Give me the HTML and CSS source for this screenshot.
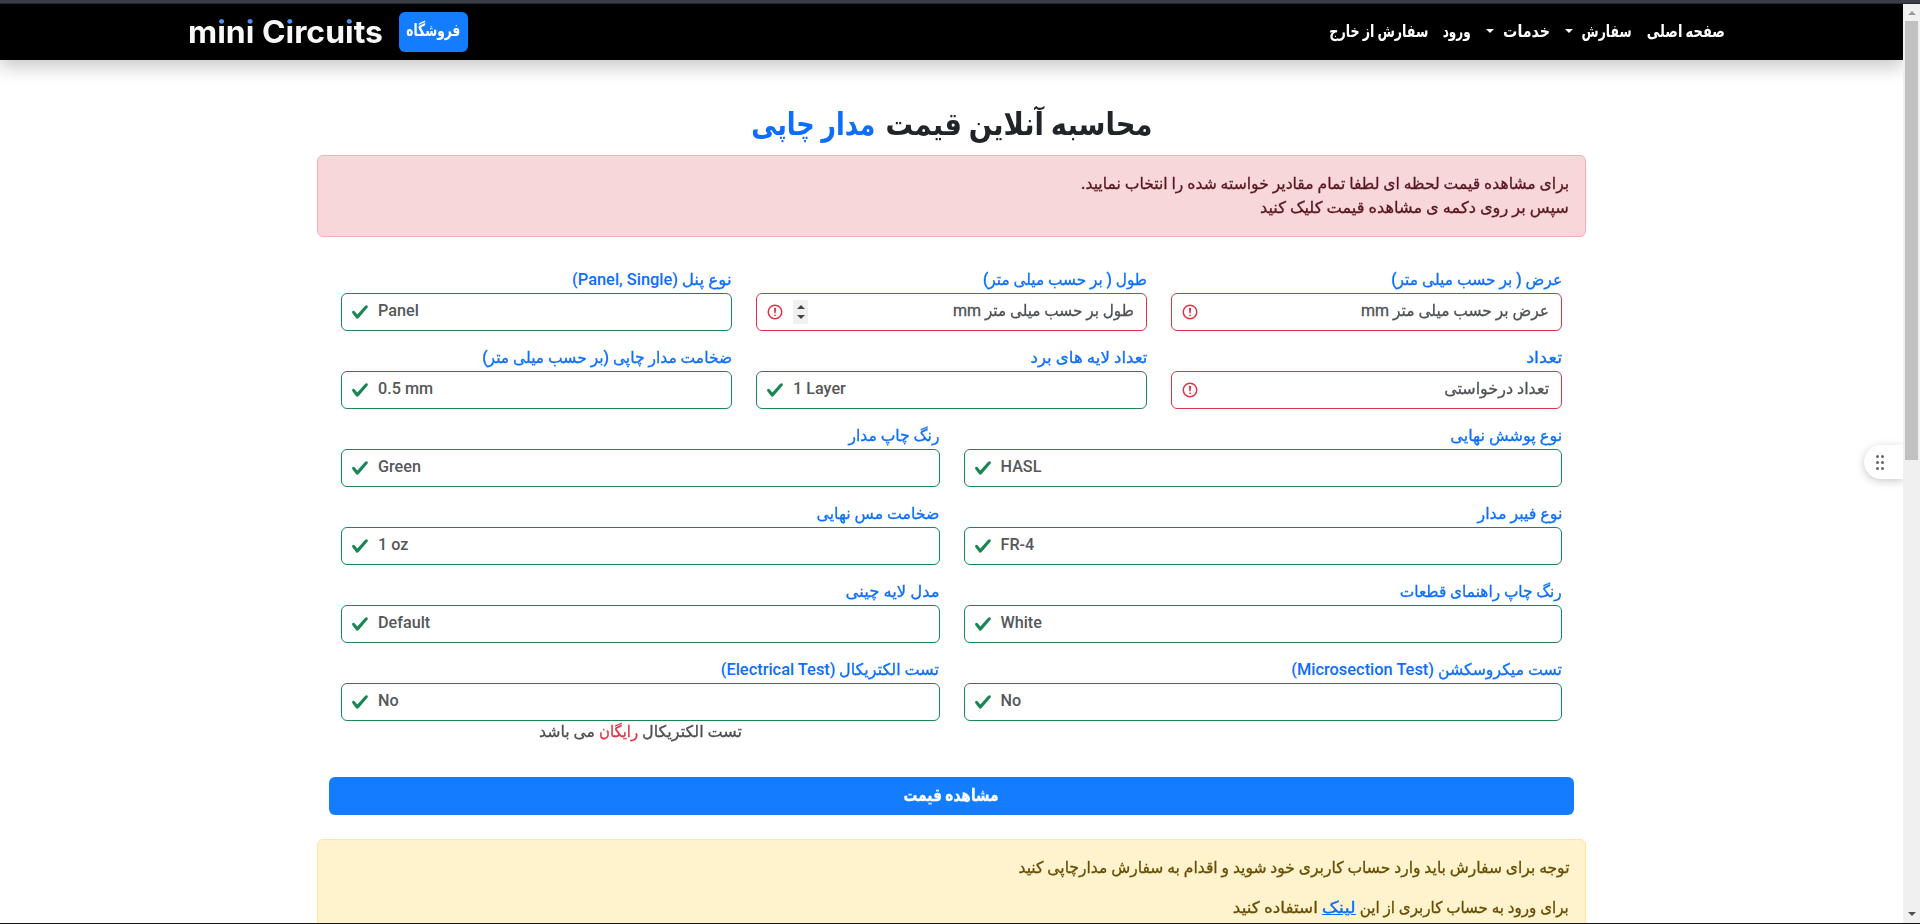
FILE: index.html
```html
<!DOCTYPE html>
<html lang="fa">
<head>
<meta charset="utf-8">
<title>mini Circuits</title>
<link rel="stylesheet" href="styles.css">
</head>
<body>
<svg class="defs" aria-hidden="true">
  <symbol id="ok" viewBox="0 0 8 8"><path fill="#198754" d="M2.3 6.73.6 4.53c-.4-1.04.46-1.4 1.1-.8l1.1 1.4 3.4-3.8c.6-.63 1.6-.27 1.2.7l-4 4.6c-.43.5-.8.4-1.1.1z"/></symbol>
  <symbol id="bad" viewBox="0 0 12 12"><g fill="none" stroke="#dc3545"><circle cx="6" cy="6" r="4.5"/><path stroke-linejoin="round" d="M5.8 3.6h.4L6 6.5z"/></g><circle cx="6" cy="8.2" r=".6" fill="#dc3545"/></symbol>
</svg>
<div class="edge-top"></div>
<div class="window">
  <div class="page" dir="rtl">
    <nav class="navbar">
      <div class="links">
        <a><span data-w="78">صفحه اصلی</span></a>
        <a class="drop"><span data-w="50">سفارش</span><i class="caret"></i></a>
        <a class="drop"><span data-w="47">خدمات</span><i class="caret"></i></a>
        <a><span data-w="28">ورود</span></a>
        <a><span data-w="99">سفارش از خارج</span></a>
      </div>
      <div class="brand">
        <a class="shop"><span data-w="54">فروشگاه</span></a>
        <a class="logo" dir="ltr"><span data-w="195">m<b>i</b>n<b>i</b> C<b>i</b>rcu<b>i</b>ts</span></a>
      </div>
    </nav>
    <main class="content">
      <h1 class="title"><span data-w="267">محاسبه آنلاین قیمت</span><span class="accent" data-w="124">مدار چاپی</span></h1>
      <div class="alert danger">
        <div><span data-w="488">برای مشاهده قیمت لحظه ای لطفا تمام مقادیر خواسته شده را انتخاب نمایید.</span></div>
        <div><span data-w="309">سپس بر روی دکمه ی مشاهده قیمت کلیک کنید</span></div>
      </div>
      <form class="form">
        <div class="row three">
          <div class="field"><label><span data-w="171">عرض ( بر حسب میلی متر)</span></label><div class="box invalid"><span class="ph"><span data-w="156">عرض بر حسب میلی متر</span> mm</span><svg><use href="#bad"/></svg></div></div>
          <div class="field"><label><span data-w="164">طول ( بر حسب میلی متر)</span></label><div class="box invalid"><span class="ph"><span data-w="149">طول بر حسب میلی متر</span> mm</span><span class="spin"><i></i><i></i></span><svg><use href="#bad"/></svg></div></div>
          <div class="field"><label><span data-w="50">نوع پنل</span> <bdi>(Panel, Single)</bdi></label><div class="box valid"><span dir="ltr">Panel</span><svg><use href="#ok"/></svg></div></div>
        </div>
        <div class="row three">
          <div class="field"><label><span data-w="36">تعداد</span></label><div class="box invalid"><span class="ph"><span data-w="105">تعداد درخواستی</span></span><svg><use href="#bad"/></svg></div></div>
          <div class="field"><label><span data-w="117">تعداد لایه های برد</span></label><div class="box valid"><span dir="ltr">1 Layer</span><svg><use href="#ok"/></svg></div></div>
          <div class="field"><label><span data-w="250">ضخامت مدار چاپی (بر حسب میلی متر)</span></label><div class="box valid"><span dir="ltr">0.5 mm</span><svg><use href="#ok"/></svg></div></div>
        </div>
        <div class="row two">
          <div class="field"><label><span data-w="112">نوع پوشش نهایی</span></label><div class="box valid"><span dir="ltr">HASL</span><svg><use href="#ok"/></svg></div></div>
          <div class="field"><label><span data-w="91">رنگ چاپ مدار</span></label><div class="box valid"><span dir="ltr">Green</span><svg><use href="#ok"/></svg></div></div>
        </div>
        <div class="row two">
          <div class="field"><label><span data-w="85">نوع فیبر مدار</span></label><div class="box valid"><span dir="ltr">FR-4</span><svg><use href="#ok"/></svg></div></div>
          <div class="field"><label><span data-w="123">ضخامت مس نهایی</span></label><div class="box valid"><span dir="ltr">1 oz</span><svg><use href="#ok"/></svg></div></div>
        </div>
        <div class="row two">
          <div class="field"><label><span data-w="162">رنگ چاپ راهنمای قطعات</span></label><div class="box valid"><span dir="ltr">White</span><svg><use href="#ok"/></svg></div></div>
          <div class="field"><label><span data-w="94">مدل لایه چینی</span></label><div class="box valid"><span dir="ltr">Default</span><svg><use href="#ok"/></svg></div></div>
        </div>
        <div class="row two">
          <div class="field"><label><span data-w="124">تست میکروسکشن</span> <bdi>(Microsection Test)</bdi></label><div class="box valid"><span dir="ltr">No</span><svg><use href="#ok"/></svg></div></div>
          <div class="field"><label><span data-w="100">تست الکتریکال</span> <bdi>(Electrical Test)</bdi></label><div class="box valid"><span dir="ltr">No</span><svg><use href="#ok"/></svg></div>
            <p class="note"><span data-w="100">تست الکتریکال</span> <span class="free" data-w="39">رایگان</span> <span data-w="56">می باشد</span></p></div>
        </div>
      </form>
      <button class="submit"><span data-w="95">مشاهده قیمت</span></button>
      <div class="alert warning">
        <p><span data-w="551">توجه برای سفارش باید وارد حساب کاربری خود شوید و اقدام به سفارش مدارچاپی کنید</span></p>
        <p><span data-w="209">برای ورود به حساب کاربری از این</span> <a data-w="34">لینک</a> <span data-w="85">استفاده کنید</span></p>
      </div>
    </main>
    <div class="handle"><i></i><i></i><i></i><i></i><i></i><i></i></div>
  </div>
  <div class="scrollbar"><i class="up"></i><div class="thumb"></div><i class="down"></i></div>
</div>
<div class="edge-bottom"></div>
<script src="fit.js"></script>
</body>
</html>
```
FILE: styles.css
```css
* { box-sizing: border-box; }
body { margin: 0; height: 924px; display: flex; flex-direction: column; overflow: hidden; background: #fff; color: #212529; font: 500 16px/24px Roboto, "DejaVu Sans", sans-serif; }
p, h1 { margin: 0; }
.defs { position: absolute; width: 0; height: 0; }
.edge-top { height: 4px; flex: none; background: #3a3c47; border-bottom: 1px solid #2a2a2e; }
.edge-bottom { height: 1px; flex: none; background: #111; }
.window { flex: 1; min-height: 0; display: flex; }
.page { position: relative; width: 1903px; height: 919px; overflow: hidden; }
[data-w] { display: inline-block; white-space: nowrap; }
[data-w] .glyphs { display: inline-block; white-space: nowrap; transform-origin: right center; }
[dir=ltr] [data-w] .glyphs { transform-origin: left center; }

.navbar { height: 56px; background: #000; color: #fff; padding: 0 178px 0 188px; display: flex; align-items: center; justify-content: space-between; box-shadow: 0 8px 16px rgba(0,0,0,.2); font-weight: 700; font-size: 17px; }
.links { display: flex; gap: 15px; padding-bottom: 3px; }
.links a { display: flex; align-items: center; }
.links .drop { gap: 9px; padding-top: 1px; }
.caret { border: 4px solid transparent; border-top-color: #fff; border-bottom: 0; }
.brand { display: flex; align-items: center; gap: 16px; }
.shop { height: 40px; width: 69px; border-radius: 6px; background: #147dff; text-align: center; line-height: 36px; }
.logo { font: 700 31px/36px Inter, sans-serif; color: #f8f8f8; }
.logo b { font-weight: 700; color: transparent; background: linear-gradient(#4b93f0 0 13px, #f8f8f8 13px); background-clip: text; -webkit-background-clip: text; }

.content { width: 1269px; margin: 49px auto 0; -webkit-text-stroke-width: .3px; }
.title { display: flex; justify-content: center; gap: 10px; height: 46px; font-size: 31px; line-height: 32px; font-weight: 700; -webkit-text-stroke-width: 0; }
.accent { color: #0d6efd; }
.alert { border: 1px solid; border-radius: 6px; padding: 16px; }
.danger { background: #f8d7da; border-color: #f1aeb5; color: #58151c; }
.warning { background: #fff3cd; border-color: #ffe69c; color: #664d03; height: 110px; }
.warning p { margin-bottom: 16px; }
.warning a { color: #0d6efd; }
.warning a .glyphs { text-decoration: underline; }

.form { padding: 16px 24px 0; }
.row { display: grid; column-gap: 24px; padding-top: 16px; height: 78px; }
.three { grid-template-columns: repeat(3, 1fr); }
.two { grid-template-columns: repeat(2, 1fr); }
.field label { display: block; height: 24px; line-height: 22px; color: #0d6efd; white-space: nowrap; }
.field bdi { font-size: 16.4px; -webkit-text-stroke-width: 0; }
.box { display: flex; align-items: center; height: 38px; border: 1px solid #198754; border-radius: 6px; padding: 0 12px 0 9px; color: #55585b; }
.box svg { width: 18px; height: 18px; flex: none; }
.valid { justify-content: flex-end; gap: 9px; -webkit-text-stroke-width: 0; font-size: 16.2px; }
.valid span { padding-bottom: 3px; }
.invalid { border-color: #dc3545; }
.invalid .ph { margin-left: auto; padding-bottom: 3px; color: #4e5154; font-weight: 400; -webkit-text-stroke-width: .3px; }
.spin { width: 15px; height: 24px; margin-left: 9px; background: #f0f0f0; display: flex; flex-direction: column; align-items: center; justify-content: space-evenly; }
.spin i { border: 4px solid transparent; border-top: 0; border-bottom-color: #444; }
.spin i + i { border-top: 4px solid #444; border-bottom: 0; }
.note { text-align: center; color: #4c4f52; line-height: 22px; }
.free { color: #dc3545; }
.submit { display: block; width: 1245px; height: 38px; margin: 56px 12px 24px; border: 0; padding: 0 0 2px; border-radius: 6px; background: #147dff; color: #fff; font: inherit; font-size: 17px; font-weight: 700; }

.handle { position: absolute; right: 0; top: 441px; width: 39px; height: 34px; border-radius: 17px 0 0 17px; background: #fff; box-shadow: 0 2px 8px rgba(0,0,0,.22); display: grid; grid-template-columns: 3px 3px; gap: 3px 2px; justify-content: start; align-content: center; padding-right: 19px; }
.handle i { width: 3px; height: 3px; border-radius: 50%; background: #666; }
.scrollbar { width: 17px; background: #f0f0f0; display: flex; flex-direction: column; align-items: center; padding: 7px 0; }
.scrollbar .up { border: 4px solid transparent; border-top: 0; border-bottom-color: #999; }
.scrollbar .thumb { width: 13px; height: 439px; margin-top: 6px; background: #c1c1c1; }
.scrollbar .down { margin-top: auto; border: 4px solid transparent; border-bottom: 0; border-top-color: #505050; }
```
FILE: fit.js
```javascript
// Condenses each label horizontally to the width given in data-w.
document.querySelectorAll('[data-w]').forEach(function (el) {
  var inner = document.createElement('span');
  inner.className = 'glyphs';
  while (el.firstChild) inner.appendChild(el.firstChild);
  el.appendChild(inner);
  var target = Number(el.dataset.w);
  var natural = inner.getBoundingClientRect().width;
  el.style.width = target + 'px';
  inner.style.transform = 'scaleX(' + target / natural + ')';
});
```
